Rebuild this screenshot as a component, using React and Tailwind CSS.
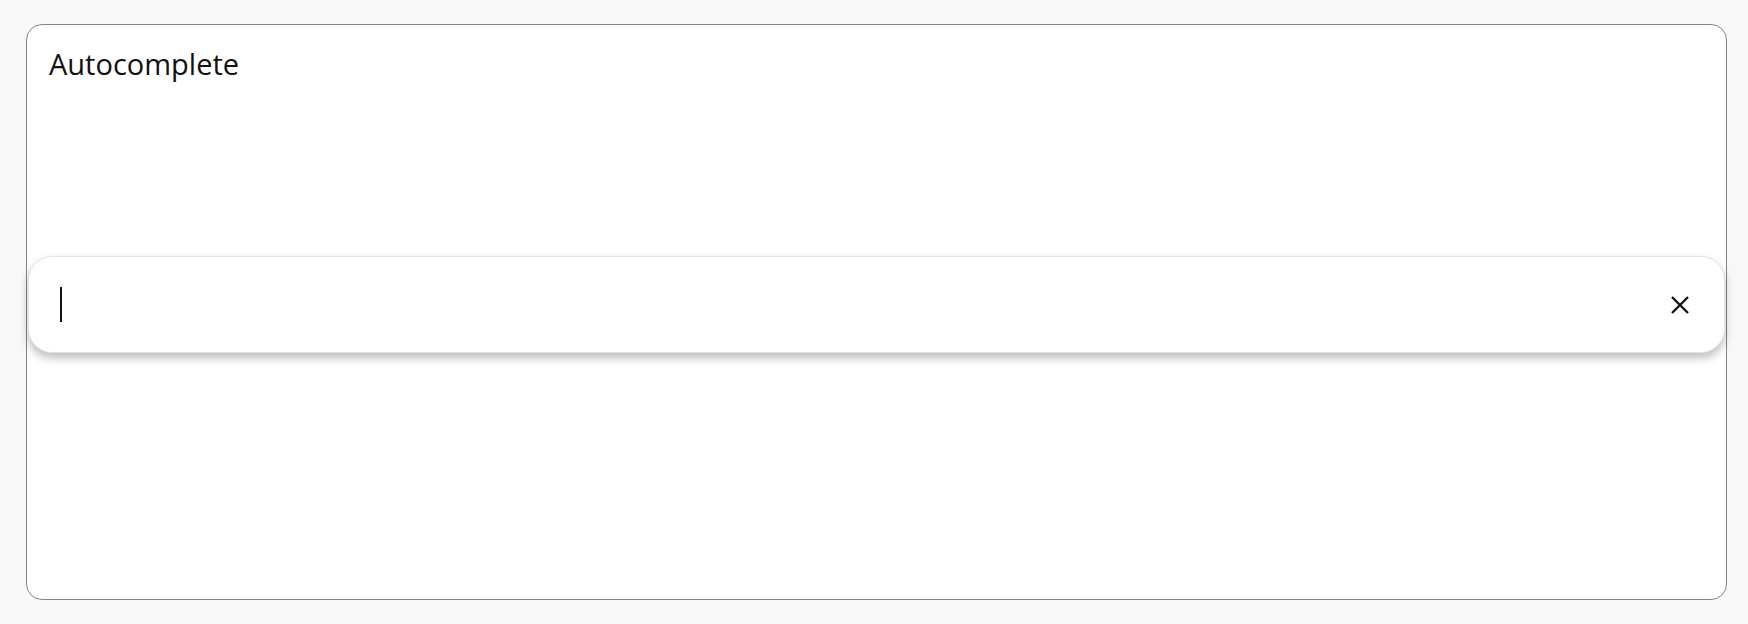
export default function App() {
  return (
    <main className="min-h-screen bg-[#f8f8f8] pl-[26px] pr-[21px] pt-[24px] pb-[24px] font-['Open_Sans',sans-serif]">
      <section className="flex h-[576px] flex-col rounded-2xl border border-[#858585] bg-white">
        <h1 className="px-[22px] pt-[19px] text-[29px] leading-[40px] text-[#111]">Autocomplete</h1>

        <div className="mt-[172px] px-[1px]">
          <div className="flex h-[97px] items-center rounded-3xl border border-[#e2e2ea] bg-white pl-[31px] pr-[35px] shadow-[0_5px_10px_rgba(0,0,0,0.26)]">
            <span className="block h-[35px] w-[2px] bg-[#111]" />
            <div className="flex-1" />
            <button type="button" className="flex h-[18px] w-[18px] items-center justify-center text-[#111]">
              <svg width="18" height="18" viewBox="0 0 18 18" fill="none" stroke="currentColor" strokeWidth="2.3">
                <path d="M1 1L17 17M17 1L1 17" />
              </svg>
            </button>
          </div>
        </div>
      </section>
    </main>
  );
}
